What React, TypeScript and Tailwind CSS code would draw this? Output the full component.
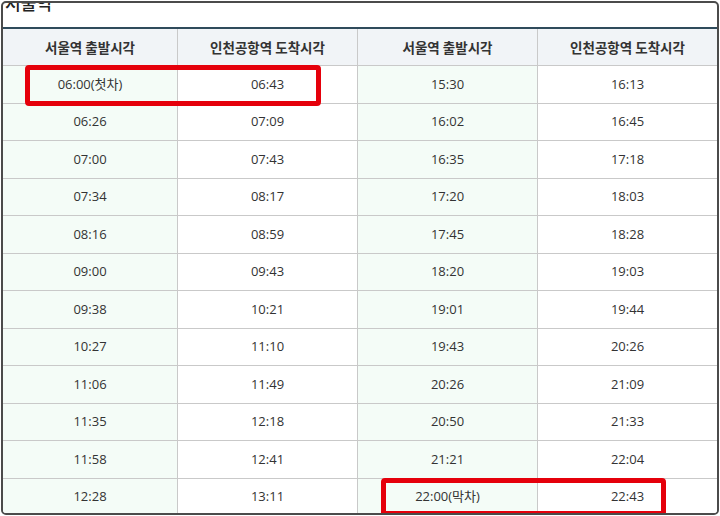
import React from "react";

const rows: [string, string, string, string][] = [
  ["06:00(첫차)", "06:43", "15:30", "16:13"],
  ["06:26", "07:09", "16:02", "16:45"],
  ["07:00", "07:43", "16:35", "17:18"],
  ["07:34", "08:17", "17:20", "18:03"],
  ["08:16", "08:59", "17:45", "18:28"],
  ["09:00", "09:43", "18:20", "19:03"],
  ["09:38", "10:21", "19:01", "19:44"],
  ["10:27", "11:10", "19:43", "20:26"],
  ["11:06", "11:49", "20:26", "21:09"],
  ["11:35", "12:18", "20:50", "21:33"],
  ["11:58", "12:41", "21:21", "22:04"],
  ["12:28", "13:11", "22:00(막차)", "22:43"],
];

const colW = ["w-[175px]", "w-[180px]", "w-[180px]", "w-[179px]"];
const headers = ["서울역 출발시각", "인천공항역 도착시각", "서울역 출발시각", "인천공항역 도착시각"];

export default function App() {
  return (
    <div className="w-[720px] h-[516px] bg-white pt-px pl-px" style={{ fontFamily: "'Noto Sans CJK KR', 'Noto Sans', sans-serif" }}>
      <div className="relative w-[718px] h-[514px] border-2 border-[#4b4b4b] rounded-[5px] overflow-hidden bg-white">
        {/* title is scrolled partly out of view */}
        <div className="h-[24px] px-[2px] overflow-hidden">
          <div className="-mt-[12px] text-[17px] font-medium text-[#222] leading-[24px]">서울역</div>
        </div>
        <div className="border-t-2 border-[#2f4b5b]">
          <div className="flex h-[37px] bg-[#f1f4f7] border-b border-[#c9c9c9]">
            {headers.map((h, i) => (
              <div
                key={i}
                className={`${colW[i]} flex items-center justify-center text-[13.5px] font-bold text-[#333] ${i < 3 ? "border-r border-[#c9c9c9]" : ""}`}
              >
                {h}
              </div>
            ))}
          </div>
          {rows.map((r, ri) => (
            <div key={ri} className="flex h-[37.5px] border-b border-[#c9c9c9]">
              {r.map((c, ci) => (
                <div
                  key={ci}
                  className={`${colW[ci]} flex items-center justify-center text-[13px] text-[#333] font-['Open_Sans','Noto_Sans_CJK_KR',sans-serif] ${ci % 2 === 0 ? "bg-[#f4fcf7]" : "bg-white"} ${ci < 3 ? "border-r border-[#c9c9c9]" : ""}`}
                >
                  {c}
                </div>
              ))}
            </div>
          ))}
        </div>
        {/* red highlight boxes drawn over the table */}
        <div className="absolute left-[22px] top-[62px] w-[296px] h-[41px] border-[5px] border-[#e5000b] rounded-[4px]" />
        <div className="absolute left-[378px] top-[475px] w-[285px] h-[38px] border-[5px] border-[#e5000b] rounded-[4px]" />
      </div>
    </div>
  );
}
